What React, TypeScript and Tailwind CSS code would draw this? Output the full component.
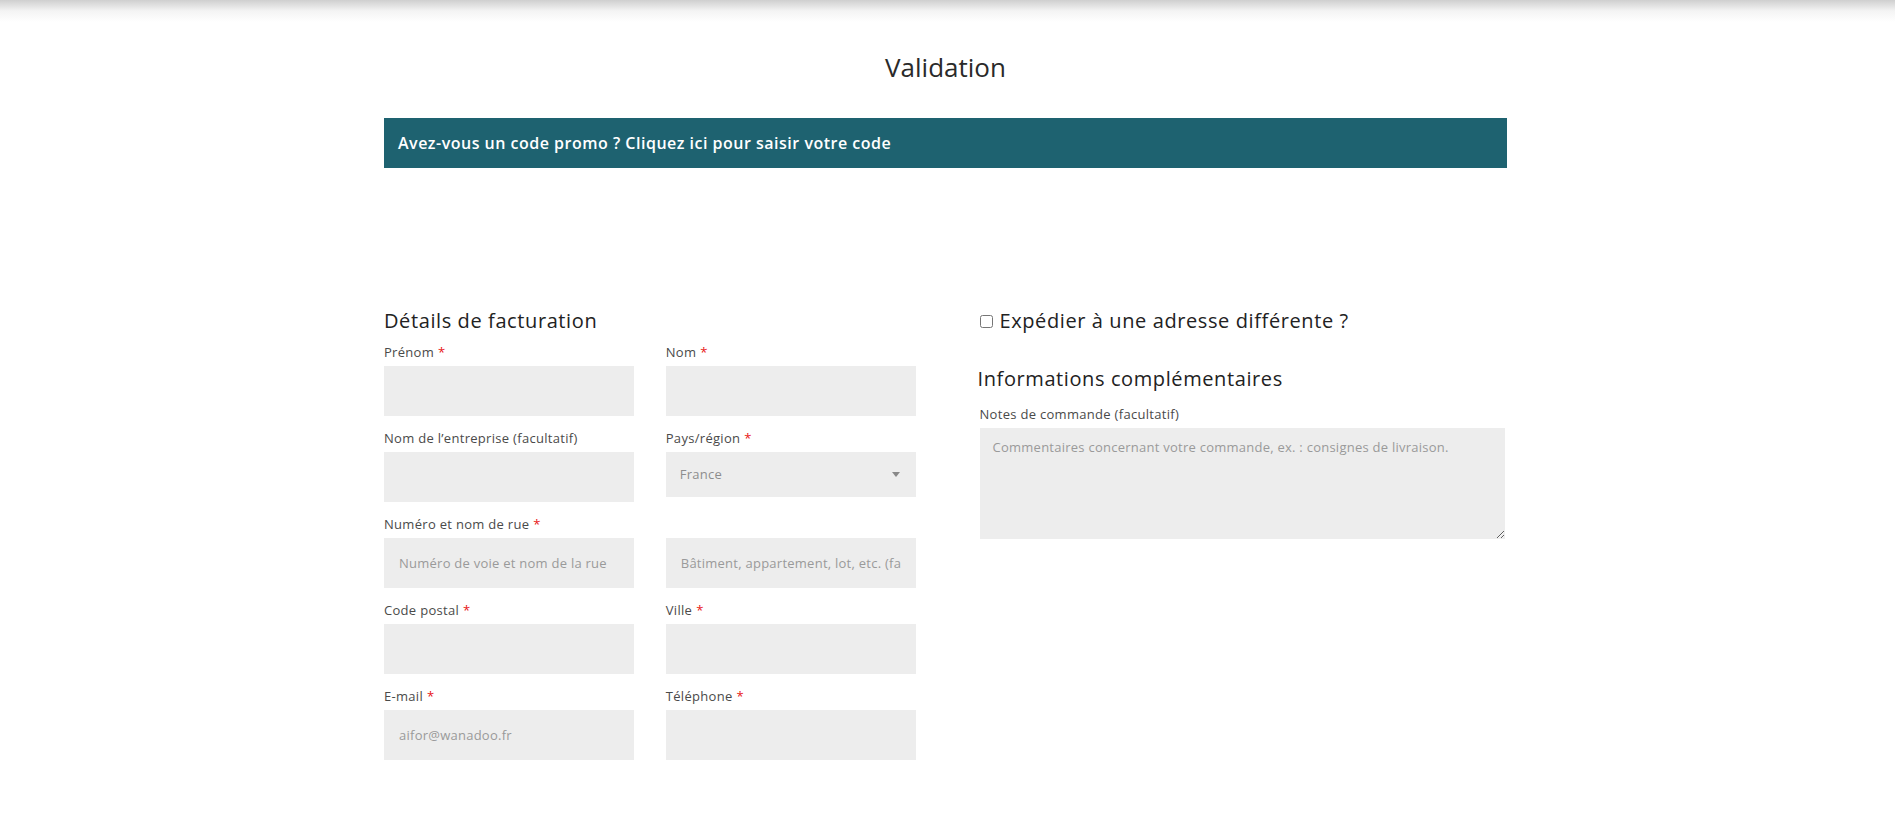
import React from 'react';

const font = { fontFamily: '"Open Sans", "Liberation Sans", sans-serif' };

const Field = ({ label, required, placeholder, hideLabel }: { label?: string; required?: boolean; placeholder?: string; hideLabel?: boolean }) => (
  <div className="flex flex-col">
    <label className={`text-[13px] leading-[20px] tracking-[0.3px] text-[#4a4a4a] mb-1 ${hideLabel ? 'invisible' : ''}`}>
      {label || '\u00a0'}
      {required && <span className="text-[#e81515] ml-1">*</span>}
    </label>
    <input
      type="text"
      placeholder={placeholder}
      className="h-[50px] w-full bg-[#ededed] px-[15px] text-[13px] tracking-[0.25px] text-[#333] placeholder:text-[#9a9a9a] outline-none"
    />
  </div>
);

export default function App() {
  return (
    <div className="min-h-[840px] bg-white" style={font}>
      {/* ombre du header */}
      <div className="h-[22px] bg-linear-to-b from-[#cfcfcf] via-[#f4f4f4] to-white" />

      <div className="w-[1123px] mx-auto -translate-x-[2px]">
        <h1 className="text-center text-[26px] leading-[32px] text-[#2a2a2a] mt-[29px]">Validation</h1>

        <div className="mt-[35px] h-[50px] bg-[#1e6270] flex items-center px-[14px]">
          <p className="text-white text-[16px] font-semibold tracking-[0.5px]">
            Avez-vous un code promo ? Cliquez ici pour saisir votre code
          </p>
        </div>

        <div className="grid grid-cols-2 gap-[60px] mt-[139px] pb-20">
          {/* Facturation */}
          <div>
            <h3 className="text-[20px] leading-[28px] tracking-[0.6px] text-[#222] mb-[7px]">Détails de facturation</h3>
            <div className="grid grid-cols-2 gap-x-[32px] gap-y-[12px]">
              <Field label="Prénom" required />
              <Field label="Nom" required />
              <Field label="Nom de l’entreprise (facultatif)" />
              <div className="flex flex-col">
                <label className="text-[13px] leading-[20px] tracking-[0.3px] text-[#4a4a4a] mb-1">
                  Pays/région<span className="text-[#e81515] ml-1">*</span>
                </label>
                <div className="h-[45px] bg-[#ededed] flex items-center justify-between px-[14px]">
                  <span className="text-[13px] tracking-[0.25px] text-[#8d8d8d]">France</span>
                  <svg width="8" height="5" viewBox="0 0 8 5" className="mr-[2px]">
                    <path d="M0 0h8L4 5z" fill="#888" />
                  </svg>
                </div>
              </div>
              <Field label="Numéro et nom de rue" required placeholder="Numéro de voie et nom de la rue" />
              <Field hideLabel placeholder="Bâtiment, appartement, lot, etc. (facultatif)" />
              <Field label="Code postal" required />
              <Field label="Ville" required />
              <Field label="E-mail" required placeholder="aifor@wanadoo.fr" />
              <Field label="Téléphone" required />
            </div>
          </div>

          {/* Livraison / infos */}
          <div className="pl-[2px]">
            <label className="flex items-center gap-[7px] h-[28px] pl-[2px]">
              <input type="checkbox" className="w-[13px] h-[13px]" />
              <span className="text-[20px] tracking-[0.6px] text-[#222]">Expédier à une adresse différente ?</span>
            </label>
            <h3 className="text-[20px] leading-[28px] tracking-[0.6px] text-[#222] mt-[30px]">Informations complémentaires</h3>
            <div className="flex flex-col mt-[11px] pr-[4px]">
              <label className="text-[13px] leading-[20px] tracking-[0.3px] text-[#4a4a4a] mb-[4px] pl-[2px]">Notes de commande (facultatif)</label>
              <textarea
                placeholder="Commentaires concernant votre commande, ex. : consignes de livraison."
                className="h-[111px] w-full bg-[#ededed] px-[13px] py-[10px] text-[13px] tracking-[0.25px] placeholder:text-[#9a9a9a] outline-none ml-[2px]"
              />
            </div>
          </div>
        </div>
      </div>
    </div>
  );
}
